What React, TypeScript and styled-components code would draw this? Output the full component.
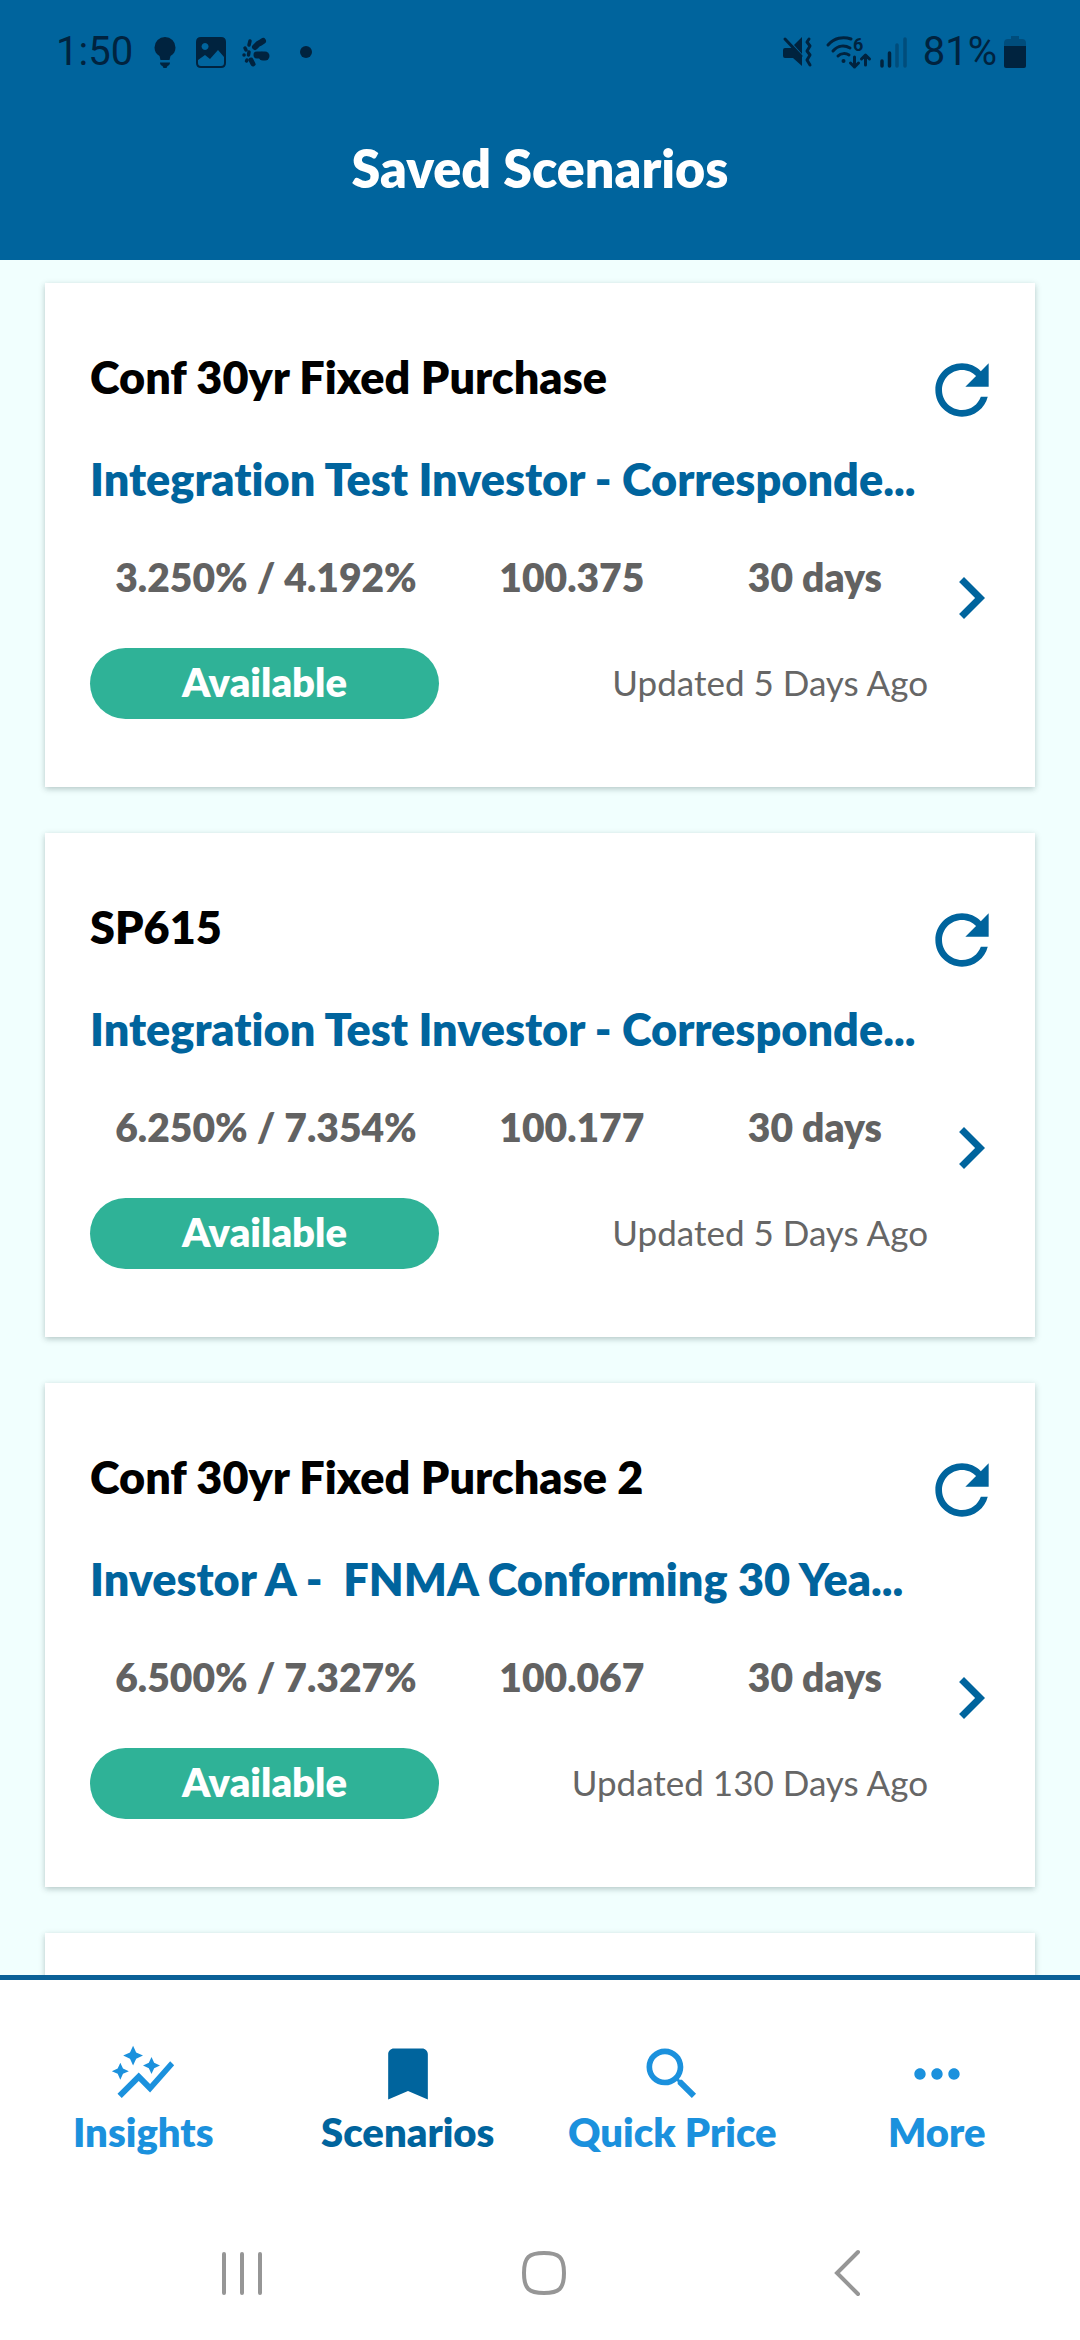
import React from "react";
import styled, { createGlobalStyle } from "styled-components";

const GlobalStyle = createGlobalStyle`
  *, *::before, *::after { box-sizing: border-box; }
  html, body, #root { height: 100%; }
  body {
    margin: 0;
    background: #f1fffe;
    font-family: Lato, "Open Sans", sans-serif;
    font-variant-ligatures: none;
  }
  h1, h2, p, ul { margin: 0; padding: 0; }
  svg { display: block; flex: none; }
`;

const Screen = styled.div`
  display: flex;
  flex-direction: column;
  height: 100vh;
  overflow: hidden;
`;

const Header = styled.header`
  flex: none;
  height: 260px;
  background: #00649d;
`;

const StatusBar = styled.div`
  display: flex;
  align-items: center;
  justify-content: space-between;
  height: 104px;
  padding: 0 54px 0 56px;
  color: #00233f;
`;

const StatusGroup = styled.div<{ $gap: number }>`
  display: flex;
  align-items: center;
  gap: ${(p) => p.$gap}px;
`;

const StatusText = styled.span`
  font: 400 40px/48px Roboto, sans-serif;
`;

const ScreenTitle = styled.h1`
  padding: 36px 0;
  color: #fff;
  font-size: 52px;
  font-weight: 800;
  line-height: 56px;
  text-align: center;
`;

const List = styled.main`
  display: flex;
  flex: 1;
  flex-direction: column;
  gap: 46px;
  min-height: 0;
  padding: 23px 45px 0;
  overflow: hidden;
`;

const Card = styled.article`
  display: flex;
  flex: none;
  min-height: 504px;
  padding: 66px 43px 66px 45px;
  background: #fff;
  box-shadow: 0 2px 6px rgba(0, 40, 40, 0.26);
`;

const CardBody = styled.div`
  flex: 1;
  min-width: 0;
`;

const CardTitle = styled.h2`
  font-size: 45px;
  font-weight: 800;
  line-height: 56px;
  white-space: pre;
`;

const Investor = styled.p`
  margin-top: 46px;
  color: #00649d;
  font-size: 45px;
  font-weight: 800;
  line-height: 56px;
  white-space: pre;
`;

const Figures = styled.div`
  display: grid;
  grid-template-columns: 42% 31% 27%;
  margin-top: 46px;
  color: #626262;
  font-size: 39px;
  font-weight: 800;
  line-height: 48px;
  text-align: center;
`;

const CardFooter = styled.div`
  display: flex;
  align-items: center;
  justify-content: space-between;
  margin-top: 47px;
`;

const Pill = styled.span`
  width: 349px;
  padding-bottom: 3px;
  border-radius: 36px;
  background: #2fb297;
  color: #fff;
  font-size: 40px;
  font-weight: 800;
  line-height: 68px;
  text-align: center;
`;

const Updated = styled.span`
  padding-bottom: 3px;
  color: #666;
  font-size: 35px;
  line-height: 48px;
`;

const CardActions = styled.div`
  display: flex;
  flex-direction: column;
  align-items: flex-end;
  gap: 136px;
  width: 64px;
  padding-top: 11px;
`;

const IconButton = styled.button`
  display: grid;
  place-items: center;
  padding: 0;
  border: 0;
  background: none;
  color: #00649d;
`;

const TabBar = styled.nav`
  display: grid;
  flex: none;
  grid-template-columns: repeat(4, 1fr);
  padding: 60px 11px 50px;
  border-top: 5px solid #0b6197;
  background: #fff;
`;

const Tab = styled.a<{ $active?: boolean }>`
  display: flex;
  flex-direction: column;
  align-items: center;
  color: ${(p) => (p.$active ? "#00649d" : "#1b91dd")};
  font-size: 40px;
  font-weight: 800;
  line-height: 48px;
  text-decoration: none;
`;

const SystemBar = styled.div`
  display: flex;
  flex: none;
  align-items: center;
  justify-content: space-around;
  height: 134px;
  padding: 0 82px 0 91px;
  background: #fff;
`;

const SystemButton = styled(IconButton)`
  width: 120px;
  height: 80px;
  color: #969696;
`;

type GlyphProps = { d: string; width: number; height: number; box?: string };

const Glyph = ({ d, width, height, box = "0 0 24 24" }: GlyphProps) => (
  <svg width={width} height={height} viewBox={box} fill="currentColor" aria-hidden="true">
    <path d={d} />
  </svg>
);

const REFRESH =
  "M17.65 6.35C16.2 4.9 14.21 4 12 4c-4.42 0-7.99 3.58-7.99 8s3.57 8 7.99 8c3.73 0 6.84-2.55 7.73-6h-2.08c-.82 2.33-3.04 4-5.65 4-3.31 0-6-2.69-6-6s2.69-6 6-6c1.66 0 3.14.69 4.22 1.78L13 11h7V4l-2.35 2.35z";
const CHEVRON = "M10 6 8.59 7.41 13.17 12l-4.58 4.59L10 18l6-6z";
const INSIGHTS =
  "M14.06 9.94 12 9l2.06-.94L15 6l.94 2.06L18 9l-2.06.94L15 12l-.94-2.06zM4 14l.94-2.06L7 11l-2.06-.94L4 8l-.94 2.06L1 11l2.06.94L4 14zm4.5-5 1.09-2.41L12 5.5 9.59 4.41 8.5 2 7.41 4.41 5 5.5l2.41 1.09L8.5 9zm-4 11.5 6-6.01 4 4L23 8.93l-1.41-1.41-7.09 7.97-4-4L3 19l1.5 1.5z";
const BOOKMARK = "M17 3H7c-1.1 0-1.99.9-1.99 2L5 21l7-3 7 3V5c0-1.1-.9-2-2-2z";
const SEARCH =
  "M15.5 14h-.79l-.28-.27C15.41 12.59 16 11.11 16 9.5 16 5.91 13.09 3 9.5 3S3 5.91 3 9.5 5.91 16 9.5 16c1.61 0 3.09-.59 4.23-1.57l.27.28v.79l5 4.99L20.49 19l-4.99-5zm-6 0C7.01 14 5 11.99 5 9.5S7.01 5 9.5 5 14 7.01 14 9.5 11.99 14 9.5 14z";
const MORE =
  "M6 10c-1.1 0-2 .9-2 2s.9 2 2 2 2-.9 2-2-.9-2-2-2zm12 0c-1.1 0-2 .9-2 2s.9 2 2 2 2-.9 2-2-.9-2-2-2zm-6 0c-1.1 0-2 .9-2 2s.9 2 2 2 2-.9 2-2-.9-2-2-2z";

const NoticeIcons = () => (
  <svg width="162" height="36" viewBox="0 0 162 36" fill="currentColor" aria-hidden="true">
    <path d="M12 3A10.500 10.500 0 0 0 1.500 13.500c0 4 2 7 5 8.500l1 4h9l1-4c3-1.500 5-4.500 5-8.500A10.500 10.500 0 0 0 12 3zM7 28.500h10c0 2-1 3-2.500 3.500l-1 2h-3l-1-2C8 31.500 7 30.500 7 28.500z" />
    <path
      fillRule="evenodd"
      d="M48 3h20q5 0 5 5v21q0 5-5 5H48q-5 0-5-5V8q0-5 5-5zm4 6a3.500 3.500 0 1 0 .1 0zM45 26v3q0 3 3 3h20q3 0 3-3v-6l-6-7-8 9-5-4z"
    />
    <g stroke="currentColor" strokeLinecap="round" fill="none">
      <path strokeWidth="6" d="M102 13l3-3M107 9l3-2" />
      <path strokeWidth="7" d="M104 21h4" />
      <path strokeWidth="9" d="M110 22h2" />
      <path strokeWidth="5" d="M98 26l2 4" />
      <path strokeWidth="3.500" d="M97 7l-1 4M92 14l1 2M91 21h.1M94 26l-.5 1M96 18l-.5 3" />
    </g>
    <circle cx="153" cy="18" r="6" />
  </svg>
);

const SignalIcons = () => (
  <svg width="134" height="36" viewBox="0 0 134 36" fill="none" stroke="currentColor" strokeLinecap="round" strokeLinejoin="round" aria-hidden="true">
    <path fill="currentColor" stroke="none" d="M12 11l8-8v17zM1 16q0-2 2-2h7l10 9v9l-9-8H3q-2 0-2-2z" />
    <path strokeWidth="3" d="M3 5l16 17M27 5l-2 3 3 4-3 5 3 4-3 5 3 5" />
    <path strokeWidth="3" d="M46 11c6-7 15-9 23-6M51 17c5-6 12-6 17-3M56 22c3-3 8-3 11-1M72.500 23v10m-4-4 4 4 4-4M83.500 31V21m-4 4 4-4 4 4" />
    <circle cx="61.500" cy="27" r="2" fill="currentColor" stroke="none" />
    <text x="71" y="17" fill="currentColor" stroke="none" fontFamily="Roboto, sans-serif" fontSize="18" fontWeight="700">6</text>
    <path strokeWidth="3.500" d="M100 27v5M107.500 19v13" />
    <path strokeWidth="3.500" opacity=".35" d="M115 11v21M123 5v27" />
  </svg>
);

const BatteryIcon = () => (
  <svg width="22" height="34" viewBox="0 0 22 34" fill="currentColor" aria-hidden="true">
    <path opacity=".35" d="M7 1h8v3h3q4 0 4 4v3H0V8q0-4 4-4h3z" />
    <path d="M0 11h22v20q0 2-2 2H2q-2 0-2-2z" />
  </svg>
);

const scenarios = [
  { name: "Conf 30yr Fixed Purchase", investor: "Integration Test Investor - Corresponde...", rate: "3.250% / 4.192%", price: "100.375", updated: "Updated 5 Days Ago" },
  { name: "SP615", investor: "Integration Test Investor - Corresponde...", rate: "6.250% / 7.354%", price: "100.177", updated: "Updated 5 Days Ago" },
  { name: "Conf 30yr Fixed Purchase 2", investor: "Investor A -  FNMA Conforming 30 Yea...", rate: "6.500% / 7.327%", price: "100.067", updated: "Updated 130 Days Ago" },
];

const tabs = [
  { label: "Insights", icon: INSIGHTS },
  { label: "Scenarios", icon: BOOKMARK, active: true },
  { label: "Quick Price", icon: SEARCH },
  { label: "More", icon: MORE },
];

export default function App() {
  return (
    <Screen>
      <GlobalStyle />
      <Header>
        <StatusBar>
          <StatusGroup $gap={20}>
            <StatusText>1:50</StatusText>
            <NoticeIcons />
          </StatusGroup>
          <StatusGroup $gap={7}>
            <SignalIcons />
            <StatusText>81%</StatusText>
            <BatteryIcon />
          </StatusGroup>
        </StatusBar>
        <ScreenTitle>Saved Scenarios</ScreenTitle>
      </Header>
      <List>
        {scenarios.map((s) => (
          <Card key={s.name}>
            <CardBody>
              <CardTitle>{s.name}</CardTitle>
              <Investor>{s.investor}</Investor>
              <Figures>
                <span>{s.rate}</span>
                <span>{s.price}</span>
                <span>30 days</span>
              </Figures>
              <CardFooter>
                <Pill>Available</Pill>
                <Updated>{s.updated}</Updated>
              </CardFooter>
            </CardBody>
            <CardActions>
              <IconButton type="button" aria-label="Refresh">
                <Glyph d={REFRESH} width={60} height={60} box="3 3 18 18" />
              </IconButton>
              <IconButton type="button" aria-label="Open">
                <Glyph d={CHEVRON} width={42} height={84} box="6 0 12 24" />
              </IconButton>
            </CardActions>
          </Card>
        ))}
        <Card />
      </List>
      <TabBar>
        {tabs.map((t) => (
          <Tab key={t.label} href="#" $active={t.active}>
            <Glyph d={t.icon} width={68} height={68} />
            {t.label}
          </Tab>
        ))}
      </TabBar>
      <SystemBar>
        <SystemButton type="button" aria-label="Recents">
          <svg width="48" height="48" viewBox="0 0 48 48" stroke="currentColor" strokeWidth="4" strokeLinecap="round" aria-hidden="true">
            <path d="M6 5v39M24 5v39M42 5v39" />
          </svg>
        </SystemButton>
        <SystemButton type="button" aria-label="Home">
          <svg width="48" height="48" viewBox="0 0 48 48" fill="none" stroke="currentColor" strokeWidth="4" aria-hidden="true">
            <path d="M24 4c15 0 20 4 20 20s-5 20-20 20S4 40 4 24 9 4 24 4z" />
          </svg>
        </SystemButton>
        <SystemButton type="button" aria-label="Back">
          <svg width="48" height="48" viewBox="0 0 48 48" fill="none" stroke="currentColor" strokeWidth="4" strokeLinecap="round" aria-hidden="true">
            <path d="M35 3 14 24l21 21" />
          </svg>
        </SystemButton>
      </SystemBar>
    </Screen>
  );
}
